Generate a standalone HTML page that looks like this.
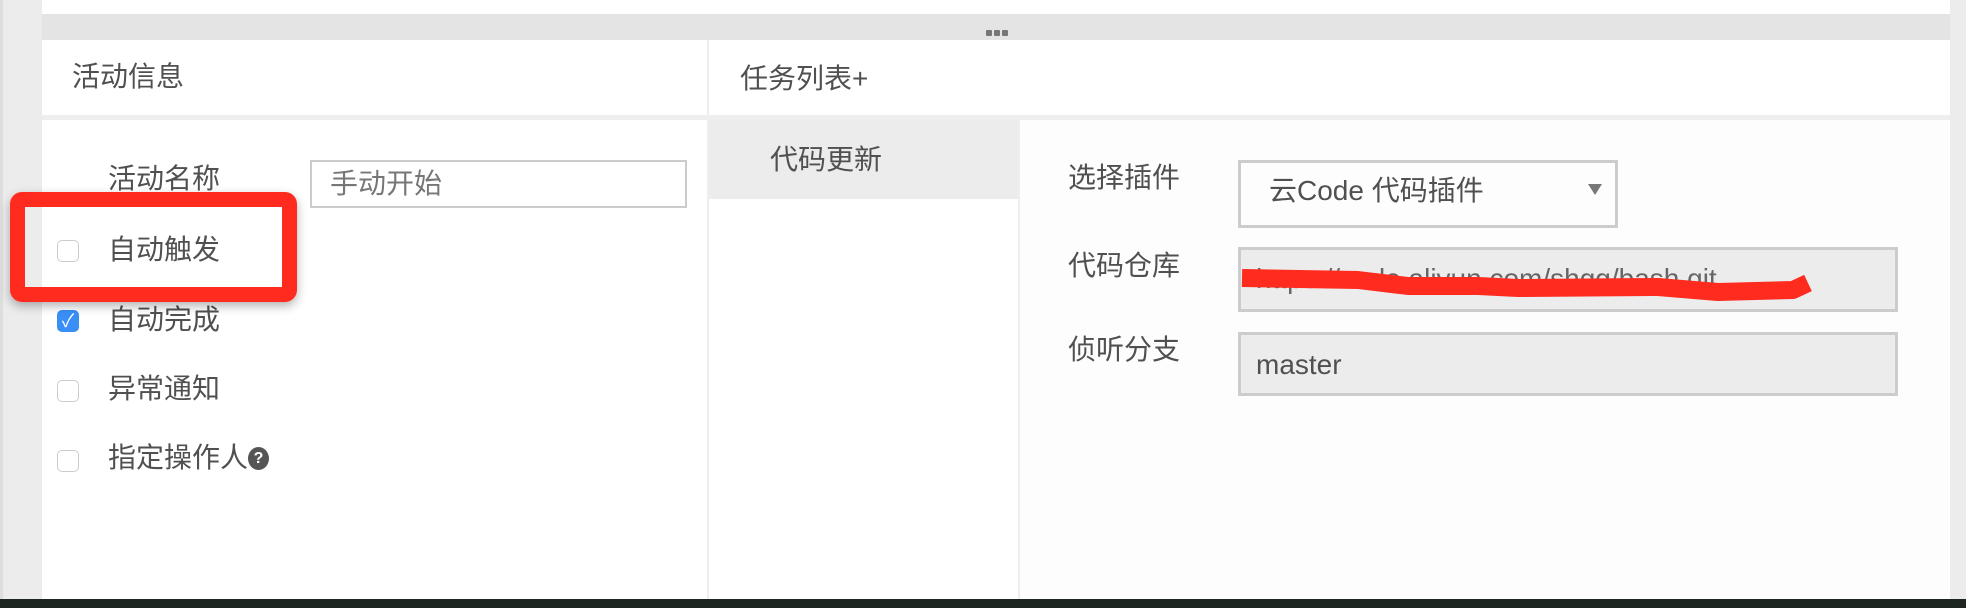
<!DOCTYPE html>
<html><head><meta charset="utf-8"><style>
*{margin:0;padding:0;box-sizing:border-box}
body{width:1966px;height:608px;position:relative;overflow:hidden;background:#fff;font-family:"Liberation Sans","Noto Sans CJK SC",sans-serif;color:#505050;font-size:28px}
.a{position:absolute}
.t{position:absolute;line-height:1;white-space:nowrap}
.cb{position:absolute;left:57px;width:22px;height:22px;border:1px solid #ccc;border-radius:5px;background:#fff}
.inp{position:absolute;border:3px solid #ccc}
</style></head><body>
<div class="a" style="left:0;top:0;width:42px;height:600px;background:#ececec;border-left:3px solid #ddd"></div>
<div class="a" style="left:1950px;top:0;width:16px;height:600px;background:#ececec"></div>
<div class="a" style="left:42px;top:14px;width:1908px;height:26px;background:#e4e4e4"></div>
<div class="a" style="left:986px;top:30px;width:6px;height:6px;background:#777;border-radius:1px"></div>
<div class="a" style="left:994px;top:30px;width:6px;height:6px;background:#777;border-radius:1px"></div>
<div class="a" style="left:1002px;top:30px;width:6px;height:6px;background:#777;border-radius:1px"></div>
<div class="a" style="left:42px;top:115px;width:1908px;height:5px;background:#eee"></div>
<div class="a" style="left:707px;top:40px;width:2px;height:560px;background:#eee"></div>
<div class="a" style="left:709px;top:120px;width:310px;height:79px;background:#ececec"></div>
<div class="a" style="left:1018px;top:120px;width:2px;height:480px;background:#eee"></div>
<div class="a" style="left:1020px;top:120px;width:930px;height:480px;background:#fdfdfd"></div>
<div class="a" style="left:0;top:599px;width:1966px;height:9px;background:#1e2622"></div>

<div class="t" style="left:72px;top:63px">活动信息</div>
<div class="t" style="left:740px;top:65px">任务列表+</div>
<div class="t" style="left:770px;top:146px">代码更新</div>

<div class="t" style="left:108px;top:165px">活动名称</div>
<div class="inp" style="left:310px;top:160px;width:377px;height:48px;border-width:2px"></div>
<div class="t" style="left:330px;top:170px;color:#777">手动开始</div>

<div class="cb" style="top:240px"></div>
<div class="t" style="left:108px;top:236px">自动触发</div>
<div class="cb" style="top:310px;background:#3a8ff6;border-color:#3a8ff6;color:#fff;font-size:18px;text-align:center;line-height:20px">✓</div>
<div class="t" style="left:108px;top:306px">自动完成</div>
<div class="cb" style="top:380px"></div>
<div class="t" style="left:108px;top:375px">异常通知</div>
<div class="cb" style="top:450px"></div>
<div class="t" style="left:108px;top:444px">指定操作人<span style="display:inline-block;width:21px;height:23px;border-radius:50%;background:#555;color:#fff;font-size:16px;font-weight:bold;text-align:center;line-height:23px;vertical-align:4px">?</span></div>

<div class="a" style="left:10px;top:192px;width:287px;height:110px;border:15px solid #ff2b1f;border-radius:12px;box-shadow:0 4px 10px rgba(0,0,0,.3)"></div>

<div class="t" style="left:1068px;top:164px">选择插件</div>
<div class="t" style="left:1068px;top:252px">代码仓库</div>
<div class="t" style="left:1068px;top:336px">侦听分支</div>

<div class="inp" style="left:1238px;top:160px;width:380px;height:68px"></div>
<div class="t" style="left:1269px;top:177px">云Code 代码插件</div>
<div class="a" style="left:1588px;top:184px;width:0;height:0;border-left:7px solid transparent;border-right:7px solid transparent;border-top:11px solid #777"></div>

<div class="inp" style="left:1238px;top:247px;width:660px;height:65px;background:#ececec"></div>
<div class="t" style="left:1256px;top:265px;color:#666">https://code.aliyun.com/shgg/bash.git</div>
<svg class="a" style="left:1238px;top:250px" width="580" height="60"><path d="M4 28 L120 30 L170 36 L240 36 L280 38 L420 37 L480 42 L555 40 L570 33" stroke="#ff2b1f" stroke-width="18" fill="none" stroke-linejoin="round"/></svg>

<div class="inp" style="left:1238px;top:332px;width:660px;height:64px;background:#ececec"></div>
<div class="t" style="left:1256px;top:351px">master</div>
</body></html>
